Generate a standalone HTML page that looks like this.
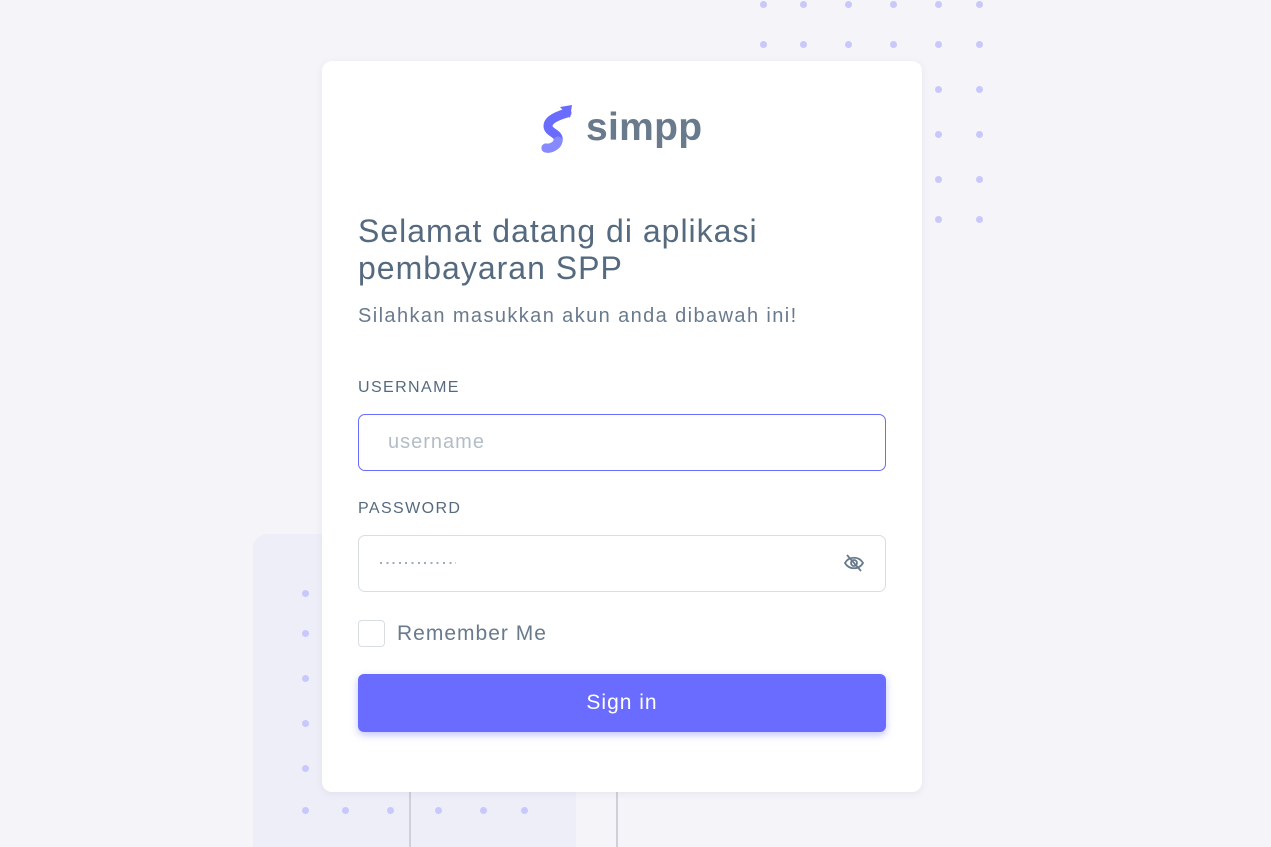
<!DOCTYPE html>
<html><head><meta charset="utf-8"><style>
*{box-sizing:border-box;margin:0;padding:0}
html,body{width:1271px;height:847px;overflow:hidden}
body{background:#f4f4f9;position:relative;font-family:"Liberation Sans",sans-serif;color:#566a7f}
.dot{position:absolute;width:7px;height:7px;border-radius:50%;background:#c8c8fc}
.panel{position:absolute;left:253px;top:534px;width:323px;height:313px;background:#eeeef8;border-radius:14px 14px 0 0}
.vl{position:absolute;top:792px;width:2px;height:55px;background:#cfd0d8}
.card{position:absolute;left:322px;top:61px;width:600px;height:731px;background:#fff;border-radius:10px;box-shadow:0 2px 8px rgba(67,89,113,.08)}
.logo{position:absolute;left:216px;top:42px;display:flex;align-items:center}
.logo span{font-size:39px;font-weight:bold;color:#697a8d;margin-left:12px;letter-spacing:0.3px}
h1{position:absolute;left:36px;top:152px;font-size:32px;font-weight:normal;line-height:37px;color:#566a7f;width:470px;letter-spacing:1px}
.sub{position:absolute;left:36px;top:244px;font-size:20px;color:#697a8d;letter-spacing:1.4px}
.lbl{position:absolute;left:36px;font-size:16px;color:#566a7f;letter-spacing:1.4px}
.inp{position:absolute;left:36px;width:528px;height:57px;border:1px solid #d9dee3;border-radius:7px;font-size:20px}
.cb{position:absolute;left:36px;top:559px;width:27px;height:27px;border:1px solid #d9dee3;border-radius:4px}
.btn{position:absolute;left:36px;top:613px;width:528px;height:58px;background:#696cff;border-radius:6px;color:#fff;font-size:21px;text-align:center;line-height:58px;letter-spacing:1px;box-shadow:0 3px 8px rgba(105,108,255,.4)}
</style></head><body>
<div class="panel"></div>
<div class="vl" style="left:409px"></div><div class="vl" style="left:616px"></div>
<div id="dots"></div>
<div class="card">
<div class="logo"><svg width="36" height="50" viewBox="0 0 36 50"><path d="M29 10 C22 12 10 16 10 23 C10 30 22 30 20 38 C19 43 12 46 8 45" fill="none" stroke="#696cff" stroke-width="9" stroke-linecap="round"/><path d="M20 38 C19 43 12 46 8 45" fill="none" stroke="#8789ff" stroke-width="9" stroke-linecap="round"/><path d="M22 4 L34 2 L32 15Z" fill="#696cff"/></svg><span>simpp</span></div>
<h1>Selamat datang di aplikasi pembayaran SPP</h1>
<div class="sub">Silahkan masukkan akun anda dibawah ini!</div>
<div class="lbl" style="top:318px">USERNAME</div>
<div class="inp" style="top:353px;border-color:#696cff;color:#b4bdc6;padding:16px 29px;letter-spacing:1px">username</div>
<div class="lbl" style="top:439px">PASSWORD</div>
<div class="inp" style="top:474px">
<div style="position:absolute;left:21px;top:26px;width:76px;height:2px;background:repeating-linear-gradient(90deg,#a1acb8 0 2px,transparent 2px 6.3px)"></div>
<svg style="position:absolute;right:20px;top:17px" width="22" height="20" viewBox="0 0 22 20" fill="none" stroke="#697a8d" stroke-width="1.8"><path d="M2 10 C6 3 16 3 20 10 C16 17 6 17 2 10Z"/><circle cx="11" cy="10" r="3"/><path d="M4 2 L18 18"/></svg></div>
<div class="cb"></div>
<div style="position:absolute;left:75px;top:561px;font-size:21px;color:#697a8d;letter-spacing:1px">Remember Me</div>
<div class="btn">Sign in</div>
</div>
<script>
var d=document.getElementById('dots'),h='';
var xs=[763,803,848,893,938,979],ys=[4,44,89,134,179,219];
ys.forEach(function(y,j){xs.forEach(function(x,i){if(j>=2&&i<4)return;h+='<div class="dot" style="left:'+(x-3)+'px;top:'+(y-3)+'px"></div>';});});
var bx=[305,345,390,438,483,524],by=[593,633,678,723,768,810];
by.forEach(function(y,j){bx.forEach(function(x,i){if(j<5&&i>0)return;h+='<div class="dot" style="left:'+(x-3)+'px;top:'+(y-3)+'px"></div>';});});
d.innerHTML=h;
</script>
</body></html>
